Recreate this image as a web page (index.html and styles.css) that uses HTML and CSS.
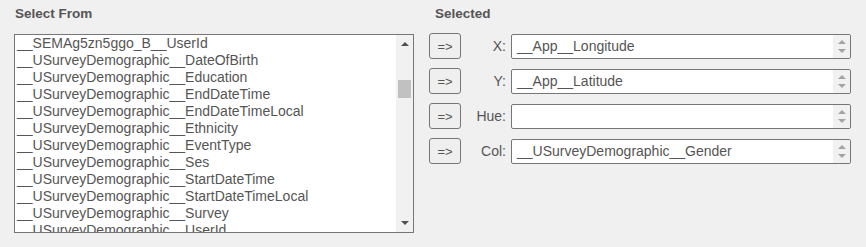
FILE: index.html
```html
<html>
<head>
  <title>Field Picker</title>
  <link rel="stylesheet" href="styles.css">
</head>
<body>

<div class="picker">
  <div class="source">
    <div class="title">Select From</div>
    <div class="listbox">
      <div class="items">
        <div class="item">__SEMAg5zn5ggo_B__UserId</div>
        <div class="item">__USurveyDemographic__DateOfBirth</div>
        <div class="item">__USurveyDemographic__Education</div>
        <div class="item">__USurveyDemographic__EndDateTime</div>
        <div class="item">__USurveyDemographic__EndDateTimeLocal</div>
        <div class="item">__USurveyDemographic__Ethnicity</div>
        <div class="item">__USurveyDemographic__EventType</div>
        <div class="item">__USurveyDemographic__Ses</div>
        <div class="item">__USurveyDemographic__StartDateTime</div>
        <div class="item">__USurveyDemographic__StartDateTimeLocal</div>
        <div class="item">__USurveyDemographic__Survey</div>
        <div class="item">__USurveyDemographic__UserId</div>
      </div>
      <div class="scrollbar">
        <span class="arrow-up"></span>
        <span class="thumb"></span>
        <span class="arrow-down"></span>
      </div>
    </div>
  </div>

  <div class="target">
    <div class="title title-right">Selected</div>
    <div class="slots">
      <div class="slot">
        <button class="move-btn">=&gt;</button>
        <label>X:</label>
        <div class="field"><span class="value">__App__Longitude</span><span class="spin"><i class="up"></i><i class="down"></i></span></div>
      </div>
      <div class="slot">
        <button class="move-btn">=&gt;</button>
        <label>Y:</label>
        <div class="field"><span class="value">__App__Latitude</span><span class="spin"><i class="up"></i><i class="down"></i></span></div>
      </div>
      <div class="slot">
        <button class="move-btn">=&gt;</button>
        <label>Hue:</label>
        <div class="field"><span class="value"></span><span class="spin"><i class="up"></i><i class="down"></i></span></div>
      </div>
      <div class="slot">
        <button class="move-btn">=&gt;</button>
        <label>Col:</label>
        <div class="field"><span class="value">__USurveyDemographic__Gender</span><span class="spin"><i class="up"></i><i class="down"></i></span></div>
      </div>
    </div>
  </div>
</div>

</body>
</html>
```

FILE: styles.css
```css
body {
  margin: 0;
  font-family: "Liberation Sans", Arial, sans-serif;
  background: #f0f0f0;
  color: #555;
}
.picker {
  display: flex;
  padding: 6px 0 0 14px;
}
.title {
  font-size: 13.5px;
  font-weight: bold;
  line-height: 16px;
  padding-left: 1px;
  color: #555;
}
.title-right {
  padding-left: 6px;
}

/* Source list */
.source {
  width: 400px;
}
.listbox {
  display: flex;
  margin-top: 12px;
  height: 197px;
  border: 1px solid #767676;
  background: #fff;
  overflow: hidden;
}
.items {
  flex: 1;
  overflow: hidden;
}
.item {
  font-size: 14px;
  line-height: 17px;
  padding: 0 2px;
  white-space: nowrap;
}
.scrollbar {
  width: 17px;
  background: #f1f1f1;
  position: relative;
}
.arrow-up, .arrow-down {
  position: absolute;
  left: 5px;
  width: 0;
  height: 0;
  border-left: 4px solid transparent;
  border-right: 4px solid transparent;
}
.arrow-up {
  top: 7px;
  border-bottom: 4px solid #505050;
}
.arrow-down {
  bottom: 7px;
  border-top: 4px solid #505050;
}
.thumb {
  position: absolute;
  top: 45px;
  left: 2px;
  width: 13px;
  height: 18px;
  background: #c1c1c1;
}

/* Target slots */
.target {
  margin-left: 15px;
}
.slots {
  margin-top: 11px;
  display: flex;
  flex-direction: column;
  gap: 9px;
}
.slot {
  display: flex;
  align-items: flex-end;
}
.move-btn {
  width: 32px;
  height: 26px;
  padding: 0;
  border: 1px solid #767676;
  border-radius: 3px;
  background: #efefef;
  color: #555;
  font-family: "Liberation Sans", Arial, sans-serif;
  font-size: 13px;
}
.slot label {
  width: 50px;
  padding-right: 5px;
  box-sizing: border-box;
  text-align: right;
  font-size: 14px;
  line-height: 25px;
}
.field {
  display: flex;
  width: 340px;
  height: 25px;
  box-sizing: border-box;
  border: 1px solid #767676;
  border-radius: 2px;
  background: #fff;
  overflow: hidden;
}
.value {
  flex: 1;
  padding-left: 5px;
  font-size: 14px;
  line-height: 23px;
  white-space: nowrap;
}
.spin {
  width: 17px;
  background: #f1f1f1;
  display: flex;
  flex-direction: column;
  align-items: center;
  justify-content: center;
  gap: 5px;
}
.spin i {
  width: 0;
  height: 0;
  border-left: 4px solid transparent;
  border-right: 4px solid transparent;
}
.spin .up {
  border-bottom: 4px solid #a3a3a3;
}
.spin .down {
  border-top: 4px solid #a3a3a3;
}
```
